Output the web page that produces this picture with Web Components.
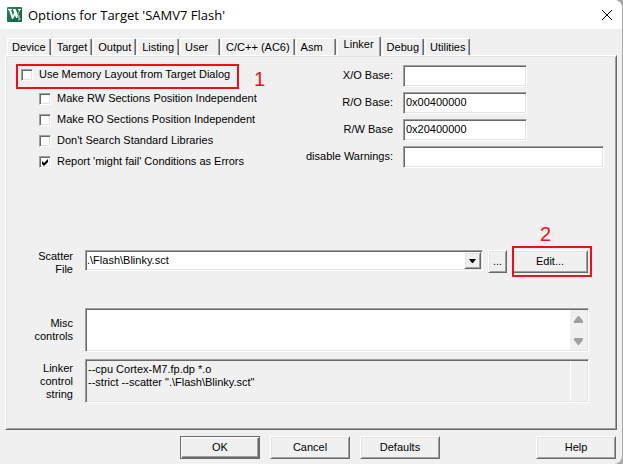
<!DOCTYPE html>
<html lang="en">
<head>
<meta charset="utf-8">
<title>Options for Target 'SAMV7 Flash'</title>
<style>
    html {
        background: #a8a8a8;
    }

    body {
        margin: 0;
        font: 11px/13px "Liberation Sans", Arial, sans-serif;
        color: #000;
    }
</style>
</head>
<body>

<options-dialog>
    <span slot="title">Options for Target 'SAMV7 Flash'</span>
    <tab-strip slot="tabs">
        <tab-item>Device</tab-item>
        <tab-item>Target</tab-item>
        <tab-item>Output</tab-item>
        <tab-item>Listing</tab-item>
        <tab-item>User</tab-item>
        <tab-item>C/C++ (AC6)</tab-item>
        <tab-item>Asm</tab-item>
        <tab-item selected>Linker</tab-item>
        <tab-item>Debug</tab-item>
        <tab-item>Utilities</tab-item>
    </tab-strip>
    <linker-page></linker-page>
    <push-button slot="actions" primary>OK</push-button>
    <push-button slot="actions">Cancel</push-button>
    <push-button slot="actions">Defaults</push-button>
    <push-button slot="help">Help</push-button>
</options-dialog>

<script>
    /** Shared helper: opens the shadow root and fills it */
    function render(host, html) {
        const template = document.createElement('template');
        template.innerHTML = html;
        host.attachShadow({ mode: 'open' }).append(template.content.cloneNode(true));
    }

    // Classic sunken / raised 3D edges
    const SUNKEN = `
        border: 1px solid;
        border-color: #a0a0a0 #fff #fff #a0a0a0;
        box-shadow: inset 1px 1px #696969, inset -1px -1px #e3e3e3;
    `;
    const RAISED = `
        border: 1px solid;
        border-color: #fff #696969 #696969 #fff;
        box-shadow: inset 1px 1px #e3e3e3, inset -1px -1px #a0a0a0;
    `;

    class OptionsDialog extends HTMLElement {
        connectedCallback() {
            render(this, `
                <style>
                    :host {
                        display: flex;
                        flex-direction: column;
                        box-sizing: border-box;
                        min-height: 100vh;
                        margin-right: 1px;
                        border-radius: 0 8px 8px 0;
                        background: #f0f0f0;
                        overflow: hidden;
                    }

                    header {
                        display: flex;
                        align-items: center;
                        gap: 6px;
                        height: 29px;
                        padding: 0 8px 0 7px;
                        background: #fff;
                    }

                    h1 {
                        flex: 1;
                        margin: 0;
                        font: 13px/20px "Open Sans", "Noto Sans", sans-serif;
                    }

                    .close {
                        display: flex;
                        padding: 1px;
                        border: 0;
                        background: none;
                    }

                    main {
                        flex: 1;
                        display: flex;
                        flex-direction: column;
                        padding: 7px 5px 0;
                    }

                    .page {
                        flex: 1;
                        ${RAISED}
                    }

                    footer {
                        display: flex;
                        gap: 10px;
                        padding: 6px 6px 5px 180px;
                    }

                    .help {
                        margin-left: auto;
                    }
                </style>

                <header>
                    <svg width="15" height="15" viewBox="0 0 15 15" aria-hidden="true">
                        <defs>
                            <linearGradient id="green" x2="1" y2="1">
                                <stop offset="0" stop-color="#2f8a5c"/>
                                <stop offset="1" stop-color="#0f5a3a"/>
                            </linearGradient>
                        </defs>
                        <rect width="15" height="15" rx="1" fill="url(#green)"/>
                        <path d="M1 2h4v1H4l2 6 1-4-1-2V2h3v1l2 5 1-5h-1V2h3v1h-1l-3 8H9L8 8l-2 4H5L2 3H1z" fill="#fff"/>
                        <path d="M13 9h-2v2h2v2h-2" fill="none" stroke="#b9dcc9"/>
                    </svg>
                    <h1><slot name="title"></slot></h1>
                    <button class="close" aria-label="Close">
                        <svg width="12" height="12" viewBox="0 0 12 12" aria-hidden="true">
                            <path d="M1 1l10 10M11 1L1 11" stroke="#000" fill="none"/>
                        </svg>
                    </button>
                </header>
                <main>
                    <slot name="tabs"></slot>
                    <div class="page"><slot></slot></div>
                </main>
                <footer>
                    <slot name="actions"></slot>
                    <div class="help"><slot name="help"></slot></div>
                </footer>
            `);
        }
    }

    class TabStrip extends HTMLElement {
        connectedCallback() {
            render(this, `
                <style>
                    :host {
                        display: flex;
                        align-items: flex-end;
                        gap: 1px;
                        padding-left: 2px;
                    }
                </style>
                <slot></slot>
            `);
            this.setAttribute('role', 'tablist');
        }
    }

    class TabItem extends HTMLElement {
        connectedCallback() {
            render(this, `
                <style>
                    :host {
                        display: block;
                    }

                    button {
                        display: block;
                        box-sizing: border-box;
                        min-width: 40px;
                        height: 17px;
                        padding: 0 4px;
                        border: 1px solid;
                        border-color: #fff #696969 transparent #fff;
                        border-bottom: 0;
                        border-radius: 2px 2px 0 0;
                        box-shadow: inset -1px 0 #a0a0a0;
                        background: #f0f0f0;
                        font: inherit;
                        color: inherit;
                        text-align: left;
                    }

                    :host([selected]) button {
                        position: relative;
                        height: 20px;
                        margin-bottom: -1px;
                        padding: 0 6px 4px;
                    }
                </style>
                <button role="tab" aria-selected="${this.hasAttribute('selected')}"><slot></slot></button>
            `);
        }
    }

    class PushButton extends HTMLElement {
        connectedCallback() {
            render(this, `
                <style>
                    :host {
                        display: block;
                        width: 80px;
                    }

                    button {
                        box-sizing: border-box;
                        width: 100%;
                        height: 23px;
                        padding: 0;
                        ${RAISED}
                        background: #f0f0f0;
                        font: inherit;
                        color: inherit;
                    }

                    :host([primary]) button {
                        border-color: #696969;
                        box-shadow: inset 1px 1px #fff, inset -1px -1px #696969, inset -2px -2px #a0a0a0;
                    }
                </style>
                <button><slot></slot></button>
            `);
        }
    }

    class CheckOption extends HTMLElement {
        connectedCallback() {
            const checked = this.hasAttribute('checked') ? 'checked' : '';
            render(this, `
                <style>
                    :host {
                        display: block;
                    }

                    label {
                        display: flex;
                        align-items: center;
                        gap: 6px;
                    }

                    input {
                        appearance: none;
                        box-sizing: border-box;
                        width: 12px;
                        height: 12px;
                        margin: 0;
                        ${SUNKEN}
                        background: #fff;
                    }

                    .box {
                        display: grid;
                    }

                    .box > * {
                        grid-area: 1 / 1;
                    }

                    svg {
                        display: none;
                    }

                    input:checked + svg {
                        display: block;
                    }
                </style>
                <label>
                    <span class="box">
                        <input type="checkbox" ${checked}>
                        <svg width="12" height="12" viewBox="0 0 12 12" aria-hidden="true">
                            <path d="M3 5l2 2 4-4v3l-4 4-2-2z"/>
                        </svg>
                    </span>
                    <slot></slot>
                </label>
            `);
        }
    }

    class TextField extends HTMLElement {
        connectedCallback() {
            render(this, `
                <style>
                    :host {
                        display: grid;
                        grid-template-columns: 94px 1fr;
                        align-items: center;
                        column-gap: 10px;
                    }

                    label {
                        text-align: right;
                    }

                    input {
                        box-sizing: border-box;
                        width: 100%;
                        max-width: var(--field-width, none);
                        height: 22px;
                        padding: 0 2px 2px;
                        ${SUNKEN}
                        background: #fff;
                        font: inherit;
                        color: inherit;
                    }
                </style>
                <label for="field">${this.getAttribute('label')}</label>
                <input id="field" type="text" value="${this.getAttribute('value') || ''}">
            `);
        }
    }

    class FileSelect extends HTMLElement {
        connectedCallback() {
            render(this, `
                <style>
                    :host {
                        display: grid;
                        grid-template-columns: 50px 1fr;
                        column-gap: 12px;
                    }

                    label {
                        text-align: right;
                    }

                    .combo {
                        display: grid;
                        align-self: start;
                        grid-template-columns: 1fr 19px;
                    }

                    select {
                        grid-area: 1 / 1 / 2 / 3;
                        appearance: none;
                        box-sizing: border-box;
                        width: 100%;
                        height: 21px;
                        padding: 0 1px;
                        border-radius: 0;
                        ${SUNKEN}
                        background: #fff;
                        font: inherit;
                        color: inherit;
                    }

                    .arrow {
                        grid-area: 1 / 2;
                        display: grid;
                        place-items: center;
                        margin: 2px 2px 2px 0;
                        ${RAISED}
                        background: #f0f0f0;
                        pointer-events: none;
                    }
                </style>
                <label for="file">${this.getAttribute('label')}</label>
                <div class="combo">
                    <select id="file"><option>${this.getAttribute('value')}</option></select>
                    <span class="arrow">
                        <svg width="7" height="4" viewBox="0 0 7 4" aria-hidden="true"><path d="M0 0h7L4 4H3z"/></svg>
                    </span>
                </div>
            `);
        }
    }

    class MemoField extends HTMLElement {
        connectedCallback() {
            const locked = this.hasAttribute('readonly') ? 'readonly' : '';
            render(this, `
                <style>
                    :host {
                        display: grid;
                        grid-template-columns: 50px 1fr;
                        column-gap: 12px;
                        align-items: center;
                    }

                    label {
                        text-align: right;
                    }

                    .memo {
                        display: flex;
                        padding: 1px;
                        ${SUNKEN}
                        background: #fff;
                    }

                    textarea {
                        flex: 1;
                        box-sizing: border-box;
                        height: 40px;
                        padding: 2px 1px;
                        border: 0;
                        outline: 0;
                        resize: none;
                        overflow: hidden;
                        background: none;
                        font: inherit;
                        color: inherit;
                    }

                    .scroll {
                        display: flex;
                        flex-direction: column;
                        justify-content: space-between;
                        align-items: center;
                        box-sizing: border-box;
                        width: 17px;
                        padding: 6px 0 5px;
                        background: #f0f0f0;
                        fill: #a0a0a0;
                    }

                    :host([readonly]) .memo {
                        background: #f0f0f0;
                    }

                    :host([readonly]) .scroll {
                        border-left: 1px solid #fff;
                        fill: none;
                    }
                </style>
                <label for="memo">${this.getAttribute('label')}</label>
                <div class="memo">
                    <textarea id="memo" ${locked}>${this.textContent}</textarea>
                    <div class="scroll" aria-hidden="true">
                        <svg width="9" height="7" viewBox="0 0 9 7"><path d="M4 0h1l4 5v2H0V5z"/></svg>
                        <svg width="9" height="7" viewBox="0 0 9 7"><path d="M4 7h1l4-5V0H0v2z"/></svg>
                    </div>
                </div>
            `);
        }
    }

    /** Red frame round its content, with a step number beside or above it */
    class StepMark extends HTMLElement {
        connectedCallback() {
            render(this, `
                <style>
                    :host {
                        display: block;
                        position: relative;
                    }

                    .frame {
                        position: absolute;
                        inset: var(--frame-inset, 0);
                        border: 2px solid #ed101c;
                        pointer-events: none;
                    }

                    .number {
                        position: absolute;
                        left: calc(100% + 15px);
                        top: 3px;
                        font: 20px/24px "Liberation Sans", Arial, sans-serif;
                        color: #ed101c;
                    }

                    :host([above]) .number {
                        left: 28px;
                        top: -28px;
                    }
                </style>
                <slot></slot>
                <span class="frame"></span>
                <span class="number">${this.getAttribute('step')}</span>
            `);
        }
    }

    class LinkerPage extends HTMLElement {
        connectedCallback() {
            render(this, `
                <style>
                    :host {
                        display: block;
                        padding: 8px 12px 25px 10px;
                    }

                    .top {
                        display: grid;
                        grid-template-columns: 223px minmax(0, 1fr);
                        column-gap: 60px;
                    }

                    .checks {
                        display: grid;
                        grid-template-columns: minmax(0, 1fr);
                        align-content: start;
                        gap: 8px;
                        white-space: nowrap;
                    }

                    .checks > check-option {
                        margin-left: 23px;
                    }

                    step-mark check-option {
                        padding: 4px 5px 8px;
                    }

                    .checks > step-mark {
                        margin-bottom: -5px;
                    }

                    .fields {
                        display: grid;
                        gap: 4px;
                    }

                    .short {
                        --field-width: 124px;
                    }

                    .files {
                        display: grid;
                        gap: 7px;
                        margin: 82px 15px 0 7px;
                    }

                    .file-row {
                        display: grid;
                        grid-template-columns: 1fr 19px 76px;
                        column-gap: 5px;
                        align-items: start;
                        margin: 0 1px 25px 0;
                    }

                    .file-row push-button {
                        width: auto;
                    }

                    .file-row > step-mark {
                        --frame-inset: -4px -4px -4px 0;
                    }
                </style>

                <div class="top">
                    <div class="checks">
                        <step-mark step="1">
                            <check-option>Use Memory Layout from Target Dialog</check-option>
                        </step-mark>
                        <check-option>Make RW Sections Position Independent</check-option>
                        <check-option>Make RO Sections Position Independent</check-option>
                        <check-option>Don't Search Standard Libraries</check-option>
                        <check-option checked>Report 'might fail' Conditions as Errors</check-option>
                    </div>
                    <div class="fields">
                        <text-field class="short" label="X/O Base:"></text-field>
                        <text-field class="short" label="R/O Base:" value="0x00400000"></text-field>
                        <text-field class="short" label="R/W Base" value="0x20400000"></text-field>
                        <text-field label="disable Warnings:"></text-field>
                    </div>
                </div>
                <div class="files">
                    <div class="file-row">
                        <file-select label="Scatter File" value=".\\Flash\\Blinky.sct"></file-select>
                        <push-button>...</push-button>
                        <step-mark step="2" above>
                            <push-button>Edit...</push-button>
                        </step-mark>
                    </div>
                    <memo-field label="Misc controls"></memo-field>
                    <memo-field label="Linker control string" readonly>--cpu Cortex-M7.fp.dp *.o\n--strict --scatter ".\\Flash\\Blinky.sct"</memo-field>
                </div>
            `);
        }
    }

    customElements.define('push-button', PushButton);
    customElements.define('check-option', CheckOption);
    customElements.define('text-field', TextField);
    customElements.define('file-select', FileSelect);
    customElements.define('memo-field', MemoField);
    customElements.define('step-mark', StepMark);
    customElements.define('tab-item', TabItem);
    customElements.define('tab-strip', TabStrip);
    customElements.define('linker-page', LinkerPage);
    customElements.define('options-dialog', OptionsDialog);
</script>
</body>
</html>
